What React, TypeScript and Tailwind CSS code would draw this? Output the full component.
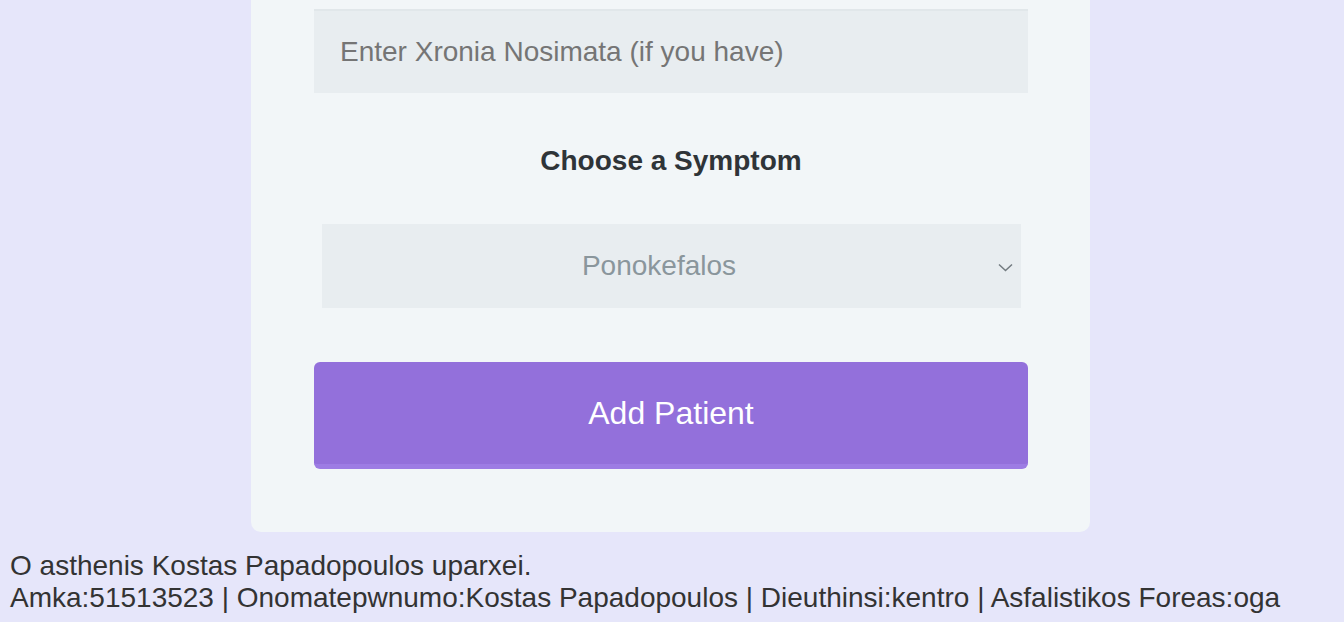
import React from 'react'

const App = () => {
    return (
        <div className="min-h-[622px] w-full bg-[#e6e6fa] text-[#333] overflow-hidden" style={{ fontFamily: '"Liberation Sans", Arial, sans-serif' }}>
            <div className="ml-[251px] w-[839px] -mt-[54px] pt-[63px] pb-[63px] pl-[63px] pr-[62px] bg-[#f2f6f8] rounded-[10px] flex flex-col items-center">
                <input
                    type="text"
                    placeholder="Enter Xronia Nosimata (if you have)"
                    className="w-full h-[84px] px-[26px] bg-[#e8edf0] border-t-2 border-[#e1e7ea] text-[28px] outline-none placeholder:text-[#757575]"
                />
                <h3 className="mt-[52px] text-[28px] font-bold text-[#2f3438] leading-[32px]">Choose a Symptom</h3>
                <div className="relative mt-[47px] w-[699px] h-[84px] bg-[#e8edf0] flex items-center justify-center">
                    <span className="text-[28px] text-[#8a969c] mr-[24px]">Ponokefalos</span>
                    <svg className="absolute right-[8px] top-[36px]" width="15" height="14" viewBox="0 0 15 14" fill="none">
                        <path d="M1 4.5 L7.5 10.5 L14 4.5" stroke="#737b80" strokeWidth="1.5" />
                    </svg>
                </div>
                <button className="mt-[54px] w-full h-[107px] bg-[#9370db] text-white text-[32px] rounded-[6px] border-b-[5px] border-[#9d7ce4]">
                    Add Patient
                </button>
            </div>
            <div className="mt-[18px] px-[10px] text-[28px] leading-[32px] text-[#333]">
                <p>O asthenis Kostas Papadopoulos uparxei.</p>
                <p>Amka:51513523 | Onomatepwnumo:Kostas Papadopoulos | Dieuthinsi:kentro | Asfalistikos Foreas:oga</p>
            </div>
        </div>
    )
}

export default App
